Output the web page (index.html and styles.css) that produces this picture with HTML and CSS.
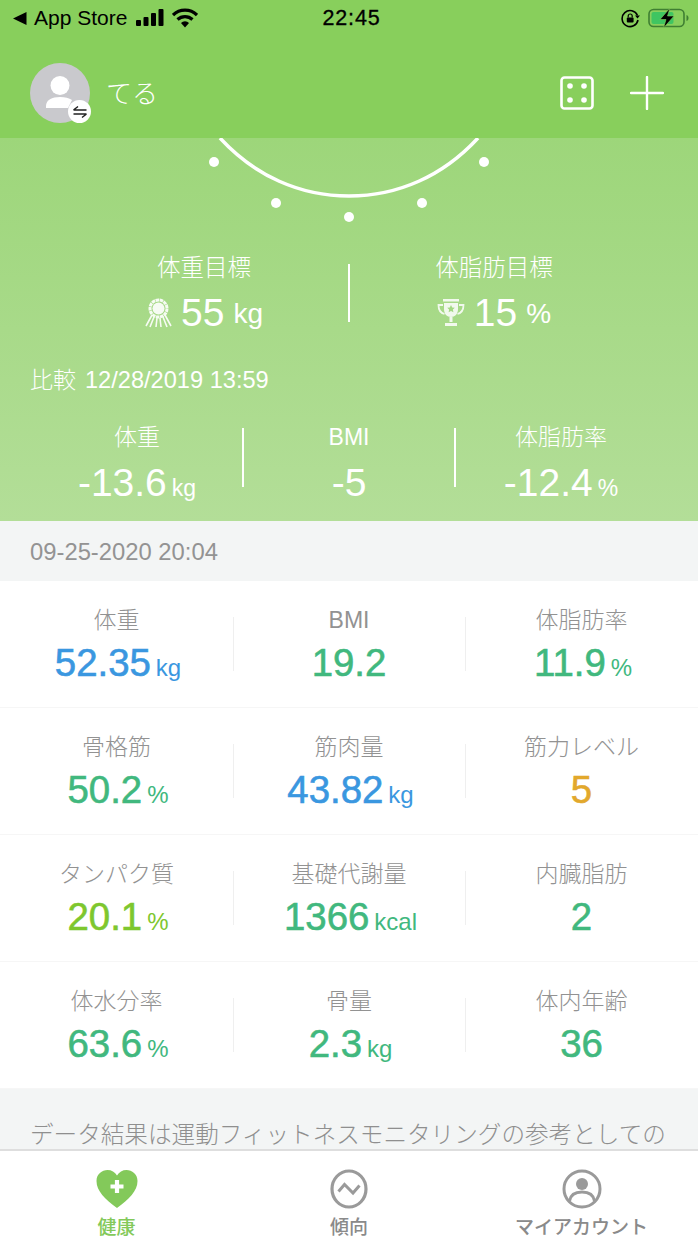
FILE: index.html
```html
<!DOCTYPE html>
<html lang="ja">
<head>
<meta charset="utf-8">
<title>健康</title>
<link rel="stylesheet" href="styles.css">
</head>
<body>
<div class="app">
  <header class="top">
    <div class="status">
      <div class="st-left">
        <svg class="back" width="14" height="13" viewBox="0 0 14 13"><path d="M0 6.500 13.500 0v13z"/></svg><span>App Store</span>
        <svg class="signal" width="29" height="18" viewBox="0 0 29 18"><rect x="0" y="11" width="5" height="6" rx="1"/><rect x="7.500" y="8" width="5" height="9" rx="1"/><rect x="15" y="4" width="5" height="13" rx="1"/><rect x="22.500" y="0" width="5" height="17" rx="1"/></svg>
        <svg class="wifi" width="26" height="20" viewBox="0 0 26 20"><path d="M1 7a17 17 0 0 1 24 0" fill="none" stroke="#000" stroke-width="3.200"/><path d="M5.500 11.500a11 11 0 0 1 15 0" fill="none" stroke="#000" stroke-width="3.200"/><path d="M9 15a5.500 5.500 0 0 1 8 0l-4 4.500z"/></svg>
      </div>
      <div class="st-time">22:45</div>
      <div class="st-right">
        <svg width="19" height="19" viewBox="0 0 19 19"><path d="M16.500 6.500A8 8 0 1 0 17 11" fill="none" stroke="#000" stroke-width="1.600"/><path d="M14 6.500h5l-2.500 3z"/><rect x="5.800" y="8.500" width="6.800" height="5" rx="1"/><path d="M7.200 8.500V7a2 2 0 0 1 4 0v1.500" fill="none" stroke="#000" stroke-width="1.200"/></svg>
        <svg width="42" height="20" viewBox="0 0 42 20"><rect x="1" y="1.500" width="35" height="17" rx="4.500" fill="none" stroke="#3f7f32" stroke-width="1.600"/><rect x="3.500" y="4" width="22" height="12" rx="2" fill="#3fc561"/><path d="M38.500 7v6c1.500-.5 2-1.500 2-3s-.5-2.500-2-3z" fill="#3f7f32"/><path d="M22 0 12 11.500h6L15.500 20 26 8h-6.500z" stroke="#88cf5c" stroke-width=".6"/></svg>
      </div>
    </div>
    <div class="appbar">
      <div class="user">
        <div class="avatar">
          <svg width="60" height="60" viewBox="0 0 60 60"><circle cx="30" cy="30" r="30" fill="#c9c9cd"/><circle cx="30" cy="22.500" r="9.500" fill="#fff"/><path d="M16 45v-2c0-6 6-9 14-9 5 0 9 1 12 3l-4 8z" fill="#fff"/></svg>
          <span class="swap"><svg width="16" height="16" viewBox="0 0 16 16" fill="none" stroke="#222" stroke-width="1.500"><path d="M1.500 6h13M1.500 6l4.500-3.500"/><path d="M14.500 10h-13M14.500 10 10 13.500"/></svg></span>
        </div>
        <span class="name">てる</span>
      </div>
      <div class="actions">
        <svg width="34" height="34" viewBox="0 0 34 34"><rect x="1.500" y="1.500" width="31" height="31" rx="3" fill="none" stroke="#fff" stroke-width="2.600"/><circle cx="10" cy="10" r="2.800" fill="#fff"/><circle cx="24" cy="10" r="2.800" fill="#fff"/><circle cx="10" cy="24" r="2.800" fill="#fff"/><circle cx="24" cy="24" r="2.800" fill="#fff"/></svg>
        <svg width="34" height="34" viewBox="0 0 34 34"><path d="M17 1v32M1 17h32" stroke="#fff" stroke-width="2.400" stroke-linecap="round"/></svg>
      </div>
    </div>
  </header>

  <section class="hero">
    <svg class="dial" width="698" height="90" viewBox="0 0 698 90">
      <path d="M220 0C255 38 300 58 349 58S443 38 478 0" fill="none" stroke="#fff" stroke-width="3.500"/>
      <g fill="#fff"><circle cx="214" cy="24" r="5"/><circle cx="276" cy="65" r="5"/><circle cx="349" cy="79" r="5"/><circle cx="422" cy="65" r="5"/><circle cx="484" cy="24" r="5"/></g>
    </svg>
    <div class="goals">
      <div class="goal">
        <div class="g-label">体重目標</div>
        <div class="g-value">
          <svg width="27" height="30" viewBox="0 0 27 30" fill="none" stroke="#fff" opacity=".9"><path d="M7 17 1 28M9 19 5 29M12 20l-1 9M15 20l1 9M18 19l4 10M20 17l6 11" stroke-width="1.600"/><circle cx="13.500" cy="10.500" r="8.500" stroke-width="3" stroke-dasharray="3.500 .6"/><circle cx="13.500" cy="10.500" r="6" fill="#fff" stroke="none"/></svg>
          <span class="num">55</span><span class="unit">kg</span>
        </div>
      </div>
      <div class="v-line tall"></div>
      <div class="goal">
        <div class="g-label">体脂肪目標</div>
        <div class="g-value">
          <svg width="28" height="28" viewBox="0 0 28 28" fill="#fff" opacity=".85"><path d="M6 0h16v2.500H6zM7 4h14v6c0 5-3 8-7 8s-7-3-7-8zM12.500 18h3v5h-3zM8 24h12v3H8z"/><path d="M6 6H1.500c0 5 2 8 6 9M22 6h4.500c0 5-2 8-6 9" fill="none" stroke="#fff" stroke-width="1.800"/><path d="m14 6 1.200 2.500 2.600.3-1.900 1.800.5 2.600-2.400-1.300-2.400 1.300.5-2.600-1.900-1.800 2.600-.3z" fill="#a3d883"/></svg>
          <span class="num">15</span><span class="unit">%</span>
        </div>
      </div>
    </div>
    <div class="compare"><span>比較</span><span class="latin">12/28/2019 13:59</span></div>
    <div class="diffs">
      <div class="diff"><div class="d-label">体重</div><div class="d-value"><span class="num">-13.6</span><span class="unit sm">kg</span></div></div>
      <div class="v-line"></div>
      <div class="diff"><div class="d-label">BMI</div><div class="d-value"><span class="num">-5</span></div></div>
      <div class="v-line"></div>
      <div class="diff"><div class="d-label">体脂肪率</div><div class="d-value"><span class="num">-12.4</span><span class="unit sm">%</span></div></div>
    </div>
  </section>

  <div class="date">09-25-2020 20:04</div>

  <section class="grid">
    <div class="cell"><div class="lbl">体重</div><div class="val blue">52.35<small>kg</small></div></div>
    <div class="cell"><div class="lbl">BMI</div><div class="val teal">19.2</div></div>
    <div class="cell"><div class="lbl">体脂肪率</div><div class="val teal">11.9<small>%</small></div></div>
    <div class="cell"><div class="lbl">骨格筋</div><div class="val teal">50.2<small>%</small></div></div>
    <div class="cell"><div class="lbl">筋肉量</div><div class="val blue">43.82<small>kg</small></div></div>
    <div class="cell"><div class="lbl">筋力レベル</div><div class="val amber">5</div></div>
    <div class="cell"><div class="lbl">タンパク質</div><div class="val lime">20.1<small>%</small></div></div>
    <div class="cell"><div class="lbl">基礎代謝量</div><div class="val teal">1366<small>kcal</small></div></div>
    <div class="cell"><div class="lbl">内臓脂肪</div><div class="val teal">2</div></div>
    <div class="cell"><div class="lbl">体水分率</div><div class="val teal">63.6<small>%</small></div></div>
    <div class="cell"><div class="lbl">骨量</div><div class="val teal">2.3<small>kg</small></div></div>
    <div class="cell"><div class="lbl">体内年齢</div><div class="val teal">36</div></div>
  </section>

  <p class="note">データ結果は運動フィットネスモニタリングの参考としての</p>

  <nav class="tabs">
    <div class="tab on">
      <svg width="44" height="40" viewBox="0 0 44 40"><path d="M22 39C10 30 1.500 22 1.500 12 1.500 5 7 1 12.500 1 16.500 1 20 3 22 6.500 24 3 27.500 1 31.500 1 37 1 42.500 5 42.500 12 42.500 22 34 30 22 39z" fill="#83c95a"/><path d="M22 11v13M15.500 17.500h13" stroke="#fff" stroke-width="4.200"/></svg>
      <span>健康</span>
    </div>
    <div class="tab">
      <svg width="40" height="40" viewBox="0 0 40 40" fill="none" stroke="#9a9a9a"><ellipse cx="20" cy="20" rx="17" ry="18" stroke-width="3.200"/><path d="M9.500 22.500 15.500 15.500 24 24 30.500 16.500" stroke-width="3"/></svg>
      <span>傾向</span>
    </div>
    <div class="tab">
      <svg width="40" height="40" viewBox="0 0 40 40" fill="none" stroke="#9a9a9a"><circle cx="20" cy="20" r="18" stroke-width="3"/><circle cx="20" cy="15" r="6" fill="#9a9a9a" stroke="none"/><path d="M7.500 32c1-6 6-9 12.500-9s11.500 3 12.500 9" stroke-width="3"/></svg>
      <span>マイアカウント</span>
    </div>
  </nav>
</div>
</body>
</html>
```
FILE: styles.css
```css
* { box-sizing: border-box; }
html, body { margin: 0; padding: 0; }
body {
  width: 698px;
  height: 1240px;
  overflow: hidden;
  background: #f3f5f5;
  font-family: "Liberation Sans", "Noto Sans CJK JP", sans-serif;
}
.app { display: flex; flex-direction: column; height: 1240px; }

.top { height: 138px; background: #88cf5c; flex: none; }
.status {
  height: 36px;
  padding: 0 8px 0 13px;
  display: grid;
  grid-template-columns: 1fr auto 1fr;
  align-items: center;
  color: #000;
  font-size: 21px;
}
.st-left { display: flex; align-items: center; gap: 7px; }
.back { display: block; }
.signal { margin-left: 2px; }
.st-time { font-size: 21.500px; letter-spacing: .8px; -webkit-text-stroke: .3px #000; }
.st-right { display: flex; justify-content: flex-end; align-items: center; gap: 8px; }

.appbar { height: 102px; padding: 12px 34px 0 30px; display: flex; justify-content: space-between; align-items: center; }
.user { display: flex; align-items: center; gap: 16px; }
.avatar { position: relative; width: 60px; height: 60px; }
.avatar > svg { display: block; }
.swap {
  position: absolute;
  right: -1px;
  bottom: 0;
  width: 23px;
  height: 23px;
  border-radius: 50%;
  background: #fff;
  display: flex;
  align-items: center;
  justify-content: center;
}
.name { color: #fff; font-size: 26px; font-weight: 300; padding-bottom: 4px; font-family: "Noto Sans CJK JP", sans-serif; }
.actions { display: flex; align-items: center; gap: 36px; }

.hero {
  position: relative;
  height: 383px;
  flex: none;
  background: linear-gradient(#9dd67a, #b3de98);
  color: #fff;
}
.dial { position: absolute; left: 0; top: 0; }
.goals {
  position: absolute;
  left: 0;
  right: 0;
  top: 112px;
  display: grid;
  grid-template-columns: 1fr 2px 1fr;
  align-items: center;
  padding: 0 60px;
}
.goal { text-align: center; }
.g-label { font-size: 23.500px; line-height: 32px; font-weight: 300; font-family: "Noto Sans CJK JP", sans-serif; }
.g-value { display: flex; justify-content: center; align-items: center; gap: 9px; height: 46px; margin-top: 8px; }
.g-value .num { font-size: 39px; font-weight: 300; }
.g-value .unit { font-size: 28px; margin-top: 2px; }
.v-line { width: 2px; height: 59px; background: #fff; align-self: start; margin-top: 7px; }
.v-line.tall { height: 58px; align-self: center; margin-top: 0; }
.compare {
  position: absolute;
  left: 30px;
  top: 225px;
  display: flex;
  gap: 9px;
  align-items: baseline;
  font-size: 23px;
  line-height: 30px;
  font-family: "Noto Sans CJK JP", sans-serif;
  font-weight: 300;
}
.compare .latin { font-family: "Liberation Sans", sans-serif; font-size: 23.600px; }
.diffs {
  position: absolute;
  left: 0;
  right: 0;
  top: 283px;
  padding: 0 32px;
  display: grid;
  grid-template-columns: 1fr 2px 1fr 2px 1fr;
}
.diff { text-align: center; }
.d-label { font-size: 23px; line-height: 32px; font-weight: 300; }
.d-value { height: 46px; line-height: 46px; margin-top: 7px; }
.d-value .num { font-size: 39px; }
.d-value .unit.sm { font-size: 23px; margin-left: 5px; }

.date {
  height: 60px;
  flex: none;
  padding-left: 30px;
  line-height: 62px;
  font-size: 23.800px;
  color: #939393;
}

.grid {
  flex: none;
  background: #fff;
  display: grid;
  grid-template-columns: 233px 232px 233px;
  grid-template-rows: repeat(4, 127px);
}
.cell {
  position: relative;
  text-align: center;
  padding-top: 22px;
  border-bottom: 1px solid #f6f6f6;
}
.cell:not(:nth-child(3n))::after {
  content: "";
  position: absolute;
  right: -1px;
  top: 36px;
  width: 1px;
  height: 54px;
  background: #efefef;
}
.lbl { font-size: 23px; line-height: 34px; color: #929292; font-weight: 300; }
.val { font-size: 38.400px; line-height: 46px; margin-top: 3px; font-weight: 500; -webkit-text-stroke: .6px currentColor; }
.val small { font-size: 24px; font-weight: 400; margin-left: 5px; margin-right: -3px; -webkit-text-stroke: 0; }
.blue { color: #3a97e0; }
.teal { color: #41b87e; }
.lime { color: #7ec72e; }
.amber { color: #e2a82c; }

.note {
  flex: 1;
  margin: 0;
  padding: 27px 0 0 30px;
  font-size: 23.600px;
  line-height: 34px;
  color: #8f8f8f;
  font-weight: 300;
  white-space: nowrap;
  overflow: hidden;
  font-family: "Noto Sans CJK JP", sans-serif;
}

.tabs {
  flex: none;
  height: 91px;
  background: #fff;
  border-top: 2px solid #dedede;
  display: grid;
  grid-template-columns: 233px 232px 233px;
}
.tab {
  display: flex;
  flex-direction: column;
  align-items: center;
  padding-top: 18px;
  color: #8a8a8a;
  font-size: 19px;
  line-height: 26px;
  font-weight: 500;
  font-family: "Noto Sans CJK JP", sans-serif;
}
.tab svg { display: block; margin-bottom: 4px; }
.tab.on { color: #83c95a; }
```
